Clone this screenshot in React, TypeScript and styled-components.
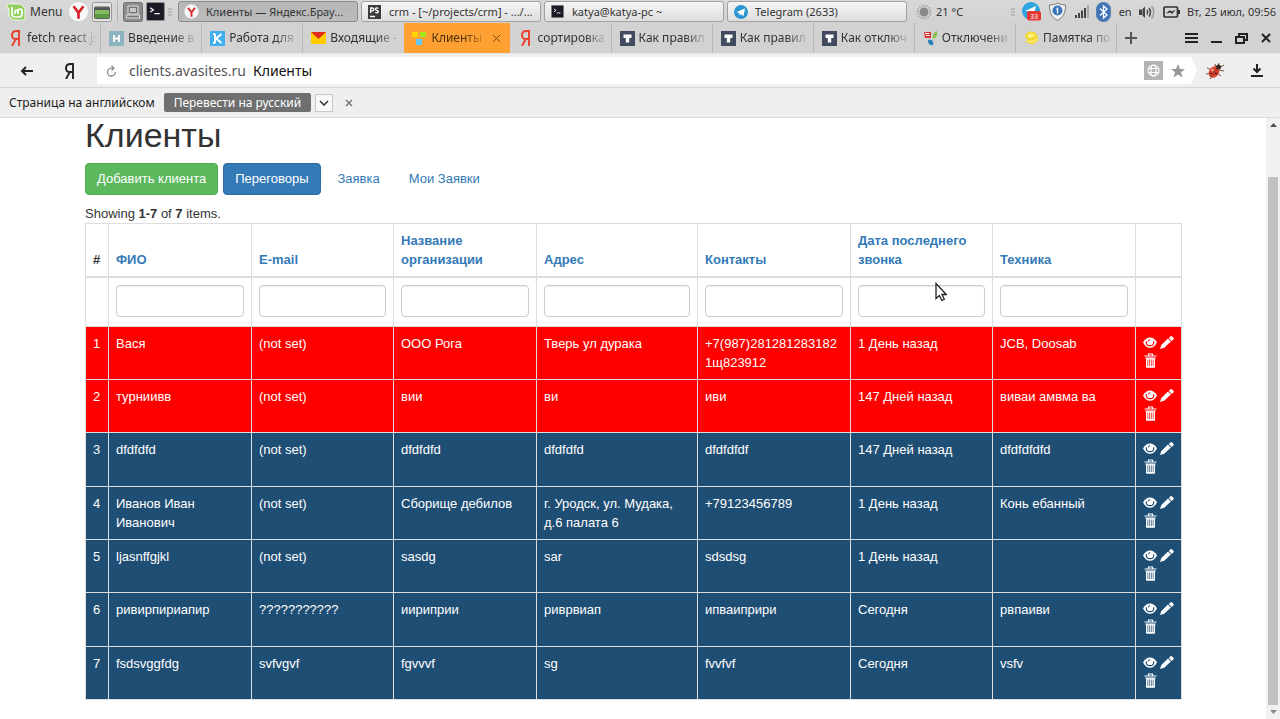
import React from "react";
import styled, { createGlobalStyle, css } from "styled-components";

const Global = createGlobalStyle`
  * { box-sizing: border-box; }
  html, body, #root { height: 100%; }
  body { margin: 0; background: #fff; overflow: hidden; }
  button { font: inherit; color: inherit; border: 0; background: none; padding: 0; }
  a { text-decoration: none; }
  svg { display: block; flex: none; }
`;

const Desktop = styled.div`
  height: 100%;
  display: flex;
  flex-direction: column;
  font: 12px/16px "Noto Sans", sans-serif;
  color: #333;
`;

/* ---- desktop panel ---- */
const Panel = styled.header`
  height: 23px;
  flex: none;
  display: flex;
  align-items: center;
  background: linear-gradient(#d8d8d8, #d2d2d2);
  white-space: nowrap;
`;
const MenuButton = styled.button`
  display: flex;
  align-items: center;
  gap: 4px;
  padding-left: 6px;
  width: 68px;
`;
const Launchers = styled.div`
  display: flex;
  align-items: center;
  gap: 3px;
  width: 110px;
`;
const LaunchButton = styled.button`
  display: flex;
`;
const Divider = styled.span`
  width: 1px;
  height: 21px;
  margin: 0 2px;
  background: #b4b4b4;
`;
const WindowList = styled.nav`
  flex: 1;
  min-width: 0;
  display: flex;
  gap: 3px;
  font-size: 11px;
`;
const WindowButton = styled.button<{ $active?: boolean }>`
  flex: 1 1 0;
  min-width: 0;
  height: 21px;
  display: flex;
  align-items: center;
  gap: 7px;
  padding: 0 5px;
  border: 1px solid #a2a2a2;
  border-radius: 3px;
  background: linear-gradient(#f5f5f5, #dedede);
  ${(p) => p.$active && css`
    background: linear-gradient(#b5b5b5, #bdbdbd);
    border-color: #8b8b8b;
  `}
`;
const IconSlot = styled.span`
  width: 15px;
  flex: none;
  display: grid;
  place-items: center;
`;
const Tray = styled.div`
  width: 373px;
  flex: none;
  display: flex;
  align-items: center;
  justify-content: space-between;
  padding: 0 4px 0 9px;
  font-size: 11px;
`;
const Weather = styled.span`
  display: flex;
  align-items: center;
  gap: 4px;
  margin-right: 40px;
`;

/* ---- browser tabs ---- */
const TabBar = styled.div`
  height: 31px;
  flex: none;
  display: flex;
  background: #d2d2d2;
  border-bottom: 1px solid #e6e6e6;
`;
const TabList = styled.div`
  flex: 0 1 1117px;
  min-width: 0;
  display: flex;
`;
const Tab = styled.button<{ $active?: boolean; $plain?: boolean }>`
  flex: 1 1 0;
  min-width: 0;
  display: flex;
  align-items: center;
  gap: 4px;
  padding: 0 3px 0 8px;
  font-size: 12px;
  line-height: 18px;
  border-right: 1px solid ${(p) => (p.$plain ? "transparent" : "#b9b9b9")};
  ${(p) => p.$active && css`background: #ffa033; color: #4b3208; border-right: 0; padding-right: 9px;`}
`;
const TabText = styled.span`
  flex: 1;
  min-width: 0;
  overflow: hidden;
  white-space: nowrap;
  text-align: left;
  mask-image: linear-gradient(to right, #000 calc(100% - 24px), transparent);
`;
const TabActions = styled.div`
  flex: 1;
  display: flex;
  align-items: center;
  justify-content: space-between;
  padding: 0 9px 0 8px;
`;
const WindowControls = styled.div`
  display: flex;
  align-items: center;
  gap: 12px;
`;
const IconButton = styled.button`
  display: flex;
  align-items: center;
`;

/* ---- address bar ---- */
const AddressBar = styled.div`
  height: 34px;
  flex: none;
  display: flex;
  align-items: center;
  background: #efefef;
  border-bottom: 1px solid #d6d6d6;
  padding-right: 17px;
`;
const NavButtons = styled.div`
  width: 97px;
  display: flex;
  align-items: center;
  gap: 32px;
  padding-left: 20px;
`;
const Address = styled.form`
  flex: 1;
  height: 27px;
  display: flex;
  align-items: center;
  gap: 8px;
  padding: 0 12px 0 9px;
  background: #fff;
  clip-path: polygon(0 0, calc(100% - 6px) 0, 100% 50%, calc(100% - 6px) 100%, 0 100%);
  font-size: 14px;
  line-height: 20px;
`;
const Url = styled.button`
  display: flex;
  gap: 7px;
  flex: 1;
  color: #555;
  margin-left: 4px;
  b { font-weight: 400; color: #111; }
`;
const Extensions = styled.div`
  display: flex;
  align-items: center;
  gap: 26px;
  padding-left: 9px;
`;

/* ---- translate bar ---- */
const TranslateBar = styled.div`
  height: 30px;
  flex: none;
  display: flex;
  align-items: center;
  gap: 4px;
  padding-left: 9px;
  background: #efefef;
  border-bottom: 1px solid #dcdcdc;
  color: #1a1a1a;
`;
const TranslateButton = styled.button`
  height: 19px;
  padding: 0 10px;
  margin-left: 5px;
  border-radius: 2px;
  background: #6f6f6f;
  color: #fff;
`;
const DropButton = styled.button`
  width: 18px;
  height: 18px;
  display: grid;
  place-items: center;
  background: #f8f8f8;
  border: 1px solid #c8c8c8;
  margin-right: 8px;
`;

/* ---- page ---- */
const Viewport = styled.div`
  flex: 1;
  min-height: 0;
  display: flex;
`;
const Page = styled.main`
  flex: 1;
  min-width: 0;
  overflow: hidden;
  padding: 0 16px;
  font: 13px/19px "Liberation Sans", Arial, sans-serif;
  color: #333;
`;
const Container = styled.div`
  max-width: 1096px;
  margin: 0 auto;
`;
const Title = styled.h1`
  margin: 0;
  padding-bottom: 11px;
  font-size: 34px;
  line-height: 34px;
  font-weight: 400;
`;
const Actions = styled.div`
  display: flex;
  gap: 5px;
  margin-bottom: 9px;
`;
const ActionLink = styled.a<{ $tone?: "green" | "blue" }>`
  height: 32px;
  padding: 5px 11px;
  border: 1px solid transparent;
  border-radius: 4px;
  color: #337ab7;
  ${(p) => p.$tone === "green" && css`background: #5cb85c; border-color: #4cae4c; color: #fff;`}
  ${(p) => p.$tone === "blue" && css`background: #337ab7; border-color: #2e6da4; color: #fff;`}
`;
const Summary = styled.div``;
const Grid = styled.table`
  width: 100%;
  table-layout: fixed;
  border-collapse: collapse;
`;
const Col = styled.col<{ $w: number }>`
  width: ${(p) => p.$w}px;
`;
const HeadCell = styled.th`
  padding: 7px;
  border: 1px solid #ddd;
  border-bottom-width: 2px;
  vertical-align: bottom;
  text-align: left;
  a { color: #337ab7; }
`;
const FilterCell = styled.td`
  padding: 7px 7px 9px;
  border: 1px solid #ddd;
`;
const FilterInput = styled.input`
  display: block;
  width: 100%;
  height: 32px;
  padding: 5px 11px;
  border: 1px solid #ccc;
  border-radius: 4px;
  background: #fff;
  font: inherit;
  box-shadow: inset 0 1px 1px rgba(0, 0, 0, 0.08);
`;
const Row = styled.tr<{ $late?: boolean }>`
  --row: ${(p) => (p.$late ? "#ff0000" : "#1f4e74")};
  height: 53px;
  background: var(--row);
  color: #fff;
  &:nth-child(3n) { height: 54px; }
`;
const Cell = styled.td`
  padding: 7px;
  border: 1px solid #ddd;
  vertical-align: top;
  overflow-wrap: anywhere;
`;
const RowActions = styled.div`
  display: flex;
  flex-wrap: wrap;
  gap: 4px 3px;
  padding-top: 2px;
  a { color: #fff; }
`;
const Scrollbar = styled.div`
  width: 14px;
  flex: none;
  display: flex;
  flex-direction: column;
  align-items: center;
  justify-content: space-between;
  padding: 5px 0;
  background: #f1f1f1;
`;
const Thumb = styled.div`
  width: 10px;
  flex: 1;
  margin: 50px 0 5px;
  background: #c1c1c1;
`;
const Pointer = styled.svg`
  position: fixed;
  left: 934px;
  top: 282px;
`;

/* ---- icons ---- */
const MintLogo = () => (
  <svg width="20" height="20" viewBox="0 0 20 20">
    <path d="M1 2h11a7 7 0 0 1 7 7v9H9a6 6 0 0 1-6-6V6H1z" fill="#8fce5d" stroke="#eef8e6" strokeWidth="1" />
    <path d="M6 5v7a3 3 0 0 0 3 3h4a3 3 0 0 0 3-3V9a2 2 0 0 0-4 0v3M12 9a2 2 0 0 0-3 0v3" fill="none" stroke="#fff" strokeWidth="1.7" />
  </svg>
);
const YandexBrowser = ({ size }: { size: number }) => (
  <svg width={size} height={size} viewBox="0 0 20 20">
    <circle cx="10" cy="10" r="9.6" fill="#f7f7f7" stroke="#c9c9c9" strokeWidth=".6" />
    <path d="M5.3 5l4.7 6.2L14.7 5M10 11v6" fill="none" stroke="#d8232a" strokeWidth="2.5" />
  </svg>
);
const DesktopIcon = () => (
  <svg width="20" height="20" viewBox="0 0 20 20">
    <rect x=".5" y=".5" width="19" height="19" rx="2" fill="#e4e4e4" stroke="#999" />
    <rect x="2.5" y="5" width="15" height="11.5" rx="1" fill="#5c9a3f" stroke="#5c5c5c" />
    <path d="M3 5.500h14v2.500H3z" fill="#555" /><path d="M3 8h14v4H3z" fill="#86bd62" />
  </svg>
);
const FilesIcon = () => (
  <svg width="20" height="20" viewBox="0 0 20 20">
    <rect x=".5" y=".5" width="19" height="19" rx="2" fill="#8c8c8c" stroke="#707070" />
    <path d="M5 4h10v8H5zM3.500 13h13v3h-13z" fill="#777" stroke="#e4e4e4" />
    <path d="M7 6h6v4H7z" fill="#c8c8c8" />
  </svg>
);
const TerminalIcon = ({ size }: { size: number }) => (
  <svg width={size} height={size} viewBox="0 0 18 18">
    <rect x=".5" y=".5" width="17" height="17" rx="1.5" fill="#1d1a26" stroke="#8a8a8a" />
    <path d="M4 5.500l3 2-3 2M8 11h5" fill="none" stroke="#fff" strokeWidth="1.2" />
  </svg>
);
const Grip = () => (
  <svg width="4" height="8" viewBox="0 0 4 8"><path d="M0 1h4M0 4h4M0 7h4" stroke="#a0a0a0" /></svg>
);
const StormIcon = () => (
  <svg width="13" height="14" viewBox="0 0 13 14">
    <rect width="13" height="14" fill="#3c3c3c" />
    <path d="M2.700 8V3h1.600a1.400 1.400 0 0 1 0 2.900H3M10.300 3.500C8.500 2.300 7 3.300 7.500 4.400s2.800 1 2.800 2.300-1.900 1.500-3.100.6M2 11.500h5" fill="none" stroke="#fff" strokeWidth="1.300" />
  </svg>
);
const TelegramIcon = () => (
  <svg width="14" height="14" viewBox="0 0 14 14">
    <circle cx="7" cy="7" r="7" fill="#2c96cf" /><path d="M2.500 7L11 3.500 9.500 11 6.800 9.200 5.500 10.300 5.200 8z" fill="#fff" />
  </svg>
);
const SunIcon = () => (
  <svg width="16" height="16" viewBox="0 0 16 16">
    <circle cx="8" cy="8" r="4.500" fill="#8a8a8a" />
    <circle cx="8" cy="8" r="6.600" fill="none" stroke="#999" strokeWidth="2.200" strokeDasharray="1 1.590" />
  </svg>
);
const TelegramTray = () => (
  <svg width="19" height="19" viewBox="0 0 19 19">
    <circle cx="9" cy="9" r="9" fill="#2ca5e0" /><path d="M3 9l11-5-1.500 6z" fill="#fff" />
    <rect x="5" y="9" width="14" height="9.500" rx="2" fill="#e53935" />
    <text x="8" y="16.500" fontSize="7" fill="#fff" fontFamily="Noto Sans">33</text>
  </svg>
);
const ShieldIcon = () => (
  <svg width="19" height="19" viewBox="0 0 19 19">
    <path d="M9.500 1c2.500 1.500 5 2 8 2 0 8-2 12-8 15.500C3.500 15 1.500 11 1.500 3c3 0 5.500-.5 8-2z" fill="#f2f2f2" stroke="#777" />
    <circle cx="9.500" cy="8.500" r="5" fill="#3b74b9" /><path d="M9.500 5.500v6M8.500 7h1" stroke="#fff" strokeWidth="1.400" />
  </svg>
);
const SignalIcon = () => (
  <svg width="14" height="13" viewBox="0 0 14 13">
    <path d="M0 10h2v3H0zM3 8h2v5H3zM6 5.500h2V13H6zM9 3h2v10H9z" fill="#444" /><path d="M12 0h2v13h-2z" fill="#aaa" />
  </svg>
);
const BluetoothIcon = () => (
  <svg width="15" height="20" viewBox="0 0 15 20">
    <rect x=".5" y=".5" width="14" height="19" rx="6.500" fill="#3f74b5" stroke="#5c85b8" />
    <path d="M4 6.500l7 6.500-3.500 3V4L11 7l-7 6.500" fill="none" stroke="#fff" strokeWidth="1.300" />
  </svg>
);
const VolumeIcon = () => (
  <svg width="16" height="14" viewBox="0 0 16 14">
    <path d="M0 4.500h3V10H0zM3.500 4L6 1.500V13L3.500 10.500z" fill="#444" />
    <path d="M8 5q1.500 2.200 0 4.500M10 3q3 4.200 0 8.500" fill="none" stroke="#444" strokeWidth="1.500" />
    <path d="M12.500 1q4.500 6.200 0 12.500" fill="none" stroke="#999" strokeWidth="1.300" />
  </svg>
);
const BatteryIcon = () => (
  <svg width="17" height="12" viewBox="0 0 17 12">
    <rect x="1" y="1" width="13.500" height="10" rx="1" fill="none" stroke="#333" strokeWidth="1.700" />
    <path d="M15 4h2v4h-2z" fill="#333" /><path d="M3 7.500l4-3.500 1 1.500L12.500 4 9 8 7.500 6.500z" fill="#333" />
  </svg>
);
const YaGlyph = ({ color }: { color: string }) => (
  <svg width="10" height="16" viewBox="0 0 10 16">
    <path d="M8 16V1H5.500C2.500 1 1 2.800 1 5.200 1 7.500 2.500 9 5 9h3M4.800 9L1 16" fill="none" stroke={color} strokeWidth="1.900" />
  </svg>
);
const HabrIcon = () => (
  <svg width="15" height="15" viewBox="0 0 15 15"><rect width="15" height="15" fill="#8cb4c0" /><path d="M5 4v7M10 4v7M5 7.500h5" stroke="#fff" strokeWidth="1.800" /></svg>
);
const WorkIcon = () => (
  <svg width="15" height="15" viewBox="0 0 15 15"><rect width="15" height="15" fill="#3fb0ee" /><path d="M3 3h2M3 12h2M5 3v9M11.500 3L6 7.500l5.500 4.500" fill="none" stroke="#fff" strokeWidth="2" /></svg>
);
const MailIcon = () => (
  <svg width="15" height="12" viewBox="0 0 15 12"><rect width="15" height="12" fill="#ffcc00" /><path d="M0 0h15L7.500 7z" fill="#e02a1d" /></svg>
);
const SquaresIcon = () => (
  <svg width="15" height="13" viewBox="0 0 15 13"><path d="M0 0h6v5H0z" fill="#ffd400" /><path d="M8 0h6v5H8z" fill="#a6e81e" /><path d="M4 7h6v6H4z" fill="#61c9f2" /></svg>
);
const TosterIcon = () => (
  <svg width="15" height="15" viewBox="0 0 15 15"><rect width="15" height="15" fill="#424a5f" /><path d="M3.500 3.500h8V7H9.200v4.500H5.800V7H3.500z" fill="#fff" /></svg>
);
const LeavesIcon = () => (
  <svg width="15" height="15" viewBox="0 0 15 15">
    <path d="M1 1h7v6H2z" fill="#d93636" /><path d="M2 2.500h4M3 4.500h4" stroke="#fff" />
    <path d="M14 0c1 5-1 7-4 8-1-4 1-7 4-8z" fill="#8cc152" /><path d="M5 9c4-1 6 1 5 5-4 1-5-2-5-5z" fill="#2c82b8" />
  </svg>
);
const HelmetIcon = () => (
  <svg width="15" height="14" viewBox="0 0 16 14"><path d="M1 6C1 3 4 0 8 0s6 3 7 7v3l-6 4-8-3 3-2z" fill="#f4d92f" /><path d="M3 5q4-5 9-1l-5 3z" fill="#fff08a" /><path d="M3 10l6 1 5-3" fill="none" stroke="#fff6b8" /></svg>
);
const Stroke = ({ d, w, h, color = "#222", sw = 2, fill = "none" }: { d: string; w: number; h: number; color?: string; sw?: number; fill?: string }) => (
  <svg width={w} height={h} viewBox={`0 0 ${w} ${h}`}><path d={d} fill={fill} stroke={color} strokeWidth={sw} /></svg>
);
const ReloadIcon = () => (
  <svg width="11" height="12" viewBox="0 0 11 12">
    <path d="M7.500 3.200H5.300A3.900 3.900 0 1 0 9.300 7" fill="none" stroke="#888" strokeWidth="1.300" />
    <path d="M5.500.8L8 3.200 5.500 5.600" fill="none" stroke="#888" strokeWidth="1.200" />
  </svg>
);
const GlobeIcon = () => (
  <svg width="19" height="19" viewBox="0 0 19 19">
    <rect width="19" height="19" fill="#b3b3b3" />
    <g fill="none" stroke="#fff" strokeWidth="1.100"><circle cx="9.500" cy="9.500" r="5.500" /><ellipse cx="9.500" cy="9.500" rx="2.500" ry="5.500" /><path d="M4.500 7.500h10M4.500 11.500h10" /></g>
  </svg>
);
const StarIcon = () => (
  <svg width="14" height="14" viewBox="0 0 14 14"><path d="M7 0l2 5h5l-4 3.300 1.500 5.200L7 10.400l-4.500 3.100L4 8.300 0 5h5z" fill="#999" /></svg>
);
const BugIcon = () => (
  <svg width="19" height="18" viewBox="0 0 19 18">
    <path d="M1 6l5 2M0 12l6-1M4 17l3-4M9 2l1 4M13 1l-1 4M18 3l-5 3M18 9l-5-1M15 14l-4-3" stroke="#76533f" />
    <ellipse cx="8" cy="10" rx="5" ry="6.200" transform="rotate(35 8 10)" fill="#d5432c" />
    <circle cx="12.500" cy="5" r="2.500" fill="#352a28" /><path d="M11.500 6L5.500 14" stroke="#7a2418" strokeWidth=".8" />
    <circle cx="6.500" cy="8" r="1.200" fill="#f4b49f" /><circle cx="10" cy="11.500" r="1" fill="#3a1a14" />
    <circle cx="5" cy="11.500" r=".8" fill="#3a1a14" />
  </svg>
);
const EyeIcon = () => (
  <svg width="14" height="13" viewBox="0 0 14 13">
    <path d="M0 6.500C1.800 3 4.300 1.500 7 1.500s5.200 1.500 7 5c-1.800 3.500-4.300 5.300-7 5.300S1.800 10 0 6.500z" fill="currentColor" />
    <path d="M3.300 5.200q-.5 4.500 3.700 4.500t3.700-4.500" fill="none" stroke="var(--row)" strokeWidth="1.200" />
    <path d="M7.200 3.600a1.800 1.800 0 0 0-1.800 1.800" fill="none" stroke="var(--row)" strokeWidth="1" />
  </svg>
);
const PencilIcon = () => (
  <svg width="14" height="13" viewBox="0 0 14 13">
    <path d="M0 13l1.300-4.100L8 2.600l2.900 2.900-6.700 6.200zM8.800 1.900L10.300.5q.9-.8 1.800 0l1.300 1.300q.8.900 0 1.700l-1.700 1.400z" fill="currentColor" />
  </svg>
);
const TrashIcon = () => (
  <svg width="14" height="15" viewBox="0 0 14 15">
    <path d="M5.500 2.500V1h4v1.500M1.500 3h12M2.500 5.200h10" fill="none" stroke="currentColor" strokeWidth="1.200" />
    <path d="M3 5.500h9V14q0 .7-.7.700H3.700Q3 14.700 3 14z" fill="currentColor" />
    <path d="M4.800 6.500v6.500M6.600 6.500v6.500M8.400 6.500v6.500M10.200 6.500v6.500" stroke="var(--row)" strokeWidth=".7" />
  </svg>
);

/* ---- data ---- */
const tabs = [
  { text: "fetch react js", icon: <YaGlyph color="#e8402f" /> },
  { text: "Введение в", icon: <HabrIcon /> },
  { text: "Работа для", icon: <WorkIcon /> },
  { text: "Входящие -", icon: <MailIcon />, plain: true },
  { text: "Клиенты", icon: <SquaresIcon />, active: true, plain: true },
  { text: "сортировка", icon: <YaGlyph color="#e8402f" /> },
  { text: "Как правил", icon: <TosterIcon /> },
  { text: "Как правил", icon: <TosterIcon /> },
  { text: "Как отключ", icon: <TosterIcon /> },
  { text: "Отключени", icon: <LeavesIcon /> },
  { text: "Памятка по", icon: <HelmetIcon /> },
];
const columns = ["ФИО", "E-mail", "Название организации", "Адрес", "Контакты", "Дата последнего звонка", "Техника"];
const widths = [23, 143, 142, 143, 161, 153, 142, 143, 46];
const clients = [
  { late: true, cells: ["Вася", "(not set)", "ООО Рога", "Тверь ул дурака", "+7(987)2812812831821щ823912", "1 День назад", "JCB, Doosab"] },
  { late: true, cells: ["турниивв", "(not set)", "вии", "ви", "иви", "147 Дней назад", "виваи амвма ва"] },
  { cells: ["dfdfdfd", "(not set)", "dfdfdfd", "dfdfdfd", "dfdfdfdf", "147 Дней назад", "dfdfdfdfd"] },
  { cells: ["Иванов Иван Иванович", "(not set)", "Сборище дебилов", "г. Уродск, ул. Мудака, д.6 палата 6", "+79123456789", "1 День назад", "Конь ебанный"] },
  { cells: ["ljasnffgjkl", "(not set)", "sasdg", "sar", "sdsdsg", "1 День назад", ""] },
  { cells: ["ривирпириапир", "???????????", "иириприи", "риврвиап", "ипваиприри", "Сегодня", "рвпаиви"] },
  { cells: ["fsdsvggfdg", "svfvgvf", "fgvvvf", "sg", "fvvfvf", "Сегодня", "vsfv"] },
];

export default function App() {
  return (
    <Desktop>
      <Global />
      <Panel>
        <MenuButton><MintLogo />Menu</MenuButton>
        <Launchers>
          <LaunchButton aria-label="Браузер"><YandexBrowser size={21} /></LaunchButton>
          <LaunchButton aria-label="Рабочий стол"><DesktopIcon /></LaunchButton>
          <Divider />
          <LaunchButton aria-label="Файлы"><FilesIcon /></LaunchButton>
          <LaunchButton aria-label="Терминал"><TerminalIcon size={19} /></LaunchButton>
          <Grip />
        </Launchers>
        <WindowList>
          <WindowButton $active><IconSlot><YandexBrowser size={15} /></IconSlot>Клиенты — Яндекс.Брау...</WindowButton>
          <WindowButton><IconSlot><StormIcon /></IconSlot>crm - [~/projects/crm] - .../...</WindowButton>
          <WindowButton><IconSlot><TerminalIcon size={13} /></IconSlot>katya@katya-pc ~</WindowButton>
          <WindowButton><IconSlot><TelegramIcon /></IconSlot>Telegram (2633)</WindowButton>
        </WindowList>
        <Tray>
          <Weather><SunIcon />21 °C</Weather>
          <Grip /><TelegramTray /><ShieldIcon /><SignalIcon /><BluetoothIcon />
          <span>en</span><VolumeIcon /><BatteryIcon /><span>Вт, 25 июл, 09:56</span>
        </Tray>
      </Panel>

      <TabBar>
        <TabList>
          {tabs.map((t, i) => (
            <Tab key={i} $active={t.active} $plain={t.plain}>
              <IconSlot>{t.icon}</IconSlot>
              <TabText>{t.text}</TabText>
              {t.active && <Stroke d="M1 1l7 7M8 1l-7 7" w={9} h={9} color="#7a4c12" sw={1} />}
            </Tab>
          ))}
        </TabList>
        <TabActions>
          <IconButton aria-label="Новая вкладка"><Stroke d="M6 0v12M0 6h12" w={12} h={12} color="#555" /></IconButton>
          <WindowControls>
            <IconButton aria-label="Меню"><Stroke d="M0 1h13M0 5h13M0 9h13" w={13} h={10} /></IconButton>
            <IconButton aria-label="Свернуть"><Stroke d="M1 9h11" w={13} h={10} /></IconButton>
            <IconButton aria-label="Восстановить"><Stroke d="M4 4V1h8v6H9M1 4h8v6H1z" w={14} h={11} /></IconButton>
            <IconButton aria-label="Закрыть"><Stroke d="M1 1l8 8M9 1l-8 8" w={10} h={10} /></IconButton>
          </WindowControls>
        </TabActions>
      </TabBar>

      <AddressBar>
        <NavButtons>
          <IconButton aria-label="Назад"><Stroke d="M13 5H2M6 1L2 5l4 4" w={13} h={10} /></IconButton>
          <IconButton aria-label="Яндекс"><YaGlyph color="#222" /></IconButton>
        </NavButtons>
        <Address>
          <IconButton type="button" aria-label="Обновить"><ReloadIcon /></IconButton>
          <Url type="button">clients.avasites.ru<b>Клиенты</b></Url>
          <GlobeIcon /><StarIcon />
        </Address>
        <Extensions>
          <IconButton aria-label="Расширение"><BugIcon /></IconButton>
          <IconButton aria-label="Загрузки"><Stroke d="M6 0v7M2.500 4.500L6 8l3.500-3.500M0 12h12" w={12} h={13} /></IconButton>
        </Extensions>
      </AddressBar>

      <TranslateBar>
        <span>Страница на английском</span>
        <TranslateButton>Перевести на русский</TranslateButton>
        <DropButton aria-label="Выбрать язык"><Stroke d="M1 1l4 4 4-4" w={10} h={6} color="#333" sw={1.5} /></DropButton>
        <IconButton aria-label="Закрыть панель"><Stroke d="M1 1l6 6M7 1l-6 6" w={8} h={8} color="#777" sw={1.5} /></IconButton>
      </TranslateBar>

      <Viewport>
        <Page>
          <Container>
            <Title>Клиенты</Title>
            <Actions>
              <ActionLink href="#" $tone="green">Добавить клиента</ActionLink>
              <ActionLink href="#" $tone="blue">Переговоры</ActionLink>
              <ActionLink href="#">Заявка</ActionLink>
              <ActionLink href="#">Мои Заявки</ActionLink>
            </Actions>
            <Summary>Showing <b>1-7</b> of <b>7</b> items.</Summary>
            <Grid>
              <colgroup>{widths.map((w, i) => <Col key={i} $w={w} />)}</colgroup>
              <thead>
                <tr>
                  <HeadCell>#</HeadCell>
                  {columns.map((c) => <HeadCell key={c}><a href="#">{c}</a></HeadCell>)}
                  <HeadCell />
                </tr>
                <tr>
                  <FilterCell />
                  {columns.map((c) => <FilterCell key={c}><FilterInput type="text" aria-label={c} /></FilterCell>)}
                  <FilterCell />
                </tr>
              </thead>
              <tbody>
                {clients.map((r, i) => (
                  <Row key={i} $late={r.late}>
                    <Cell>{i + 1}</Cell>
                    {r.cells.map((c, j) => <Cell key={j}>{c}</Cell>)}
                    <Cell>
                      <RowActions>
                        <a href="#" aria-label="Просмотр"><EyeIcon /></a>
                        <a href="#" aria-label="Изменить"><PencilIcon /></a>
                        <a href="#" aria-label="Удалить"><TrashIcon /></a>
                      </RowActions>
                    </Cell>
                  </Row>
                ))}
              </tbody>
            </Grid>
          </Container>
        </Page>
        <Scrollbar>
          <Stroke d="M0 4l3.500-4 3.500 4z" w={7} h={4} color="none" fill="#505050" />
          <Thumb />
          <Stroke d="M0 0l3.500 4 3.500-4z" w={7} h={4} color="none" fill="#8a8a8a" />
        </Scrollbar>
      </Viewport>
      <Pointer width="13" height="20" viewBox="0 0 13 20">
        <path d="M2 1.500v15l3.400-3 2.400 5 2.500-1.200-2.300-4.800h4.300z" fill="#fff" stroke="#222" strokeWidth="1.300" />
      </Pointer>
    </Desktop>
  );
}
